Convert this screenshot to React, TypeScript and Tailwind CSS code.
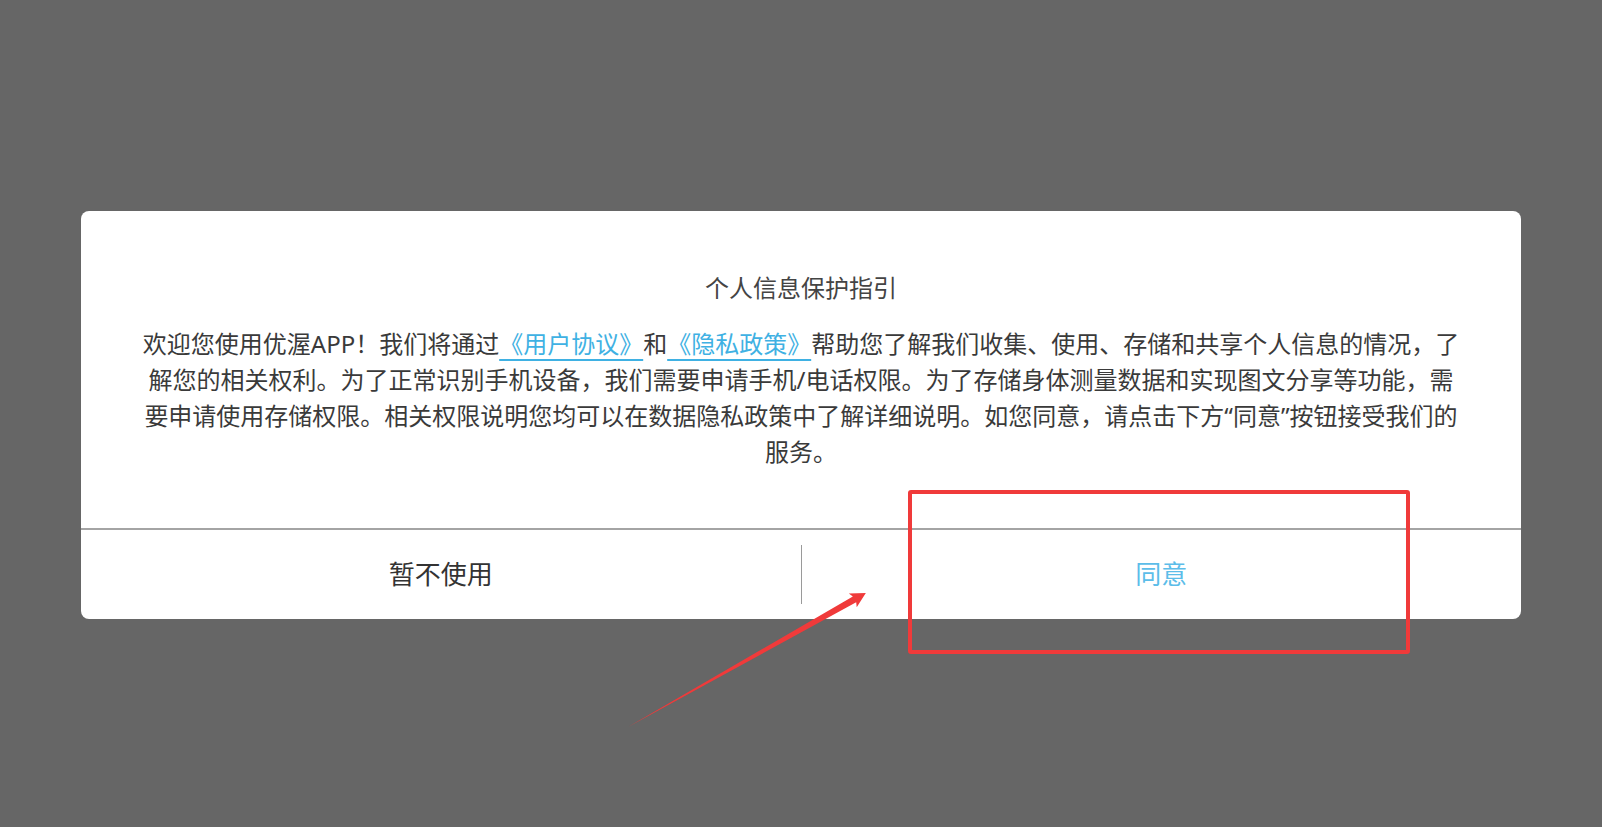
const FONT = "font-['Noto_Sans','Noto_Sans_CJK_SC',sans-serif]";

function Arrow() {
  // tapered red annotation arrow, tail bottom-left -> tip top-right
  const L = 273;
  return (
    <svg
      className="absolute left-0 top-0 pointer-events-none"
      width="1602"
      height="827"
      viewBox="0 0 1602 827"
    >
      <g transform="translate(628 727) rotate(-29.4)">
        <polygon
          points={`0,0 ${L - 13},-3.4 ${L - 15},-8 ${L},0 ${L - 15},8 ${L - 13},3.4`}
          fill="#f03a3a"
        />
      </g>
    </svg>
  );
}

export default function App() {
  return (
    <div className={`relative h-[827px] w-full overflow-hidden bg-[#666666] ${FONT}`}>
      <div className="flex justify-center pt-[211px]">
        <div className="w-[1440px] overflow-hidden rounded-lg bg-white">
          <div className="pt-[59px] text-center text-[24px] leading-[36px] text-[#444444]">
            个人信息保护指引
          </div>

          <p className="mx-auto mt-[20px] w-[1324px] text-center text-[24px] leading-[36px] text-[#3a3a3a] [text-spacing-trim:space-all]">
            欢迎您使用优渥APP！我们将通过
            <span className="text-[#3fb1e3] underline decoration-[1.5px] underline-offset-[6px]">《用户协议》</span>
            和
            <span className="text-[#3fb1e3] underline decoration-[1.5px] underline-offset-[6px]">《隐私政策》</span>
            帮助您了解我们收集、使用、存储和共享个人信息的情况，了解您的相关权利。为了正常识别手机设备，我们需要申请手机/电话权限。为了存储身体测量数据和实现图文分享等功能，需要申请使用存储权限。相关权限说明您均可以在数据隐私政策中了解详细说明。如您同意，请点击下方“同意”按钮接受我们的服务。
          </p>

          <div className="mt-[58px] h-[2px] bg-[#a4a4a4]" />

          <div className="flex h-[89px] items-center">
            <button className="flex h-full flex-1 items-center justify-center text-[26px] text-[#333333]">
              暂不使用
            </button>
            <div className="h-[59px] w-px bg-[#9a9a9a]" />
            <button className="flex h-full flex-1 items-center justify-center text-[26px] text-[#5cbde9]">
              同意
            </button>
          </div>
        </div>
      </div>

      {/* annotation overlay */}
      <div className="absolute left-[908px] top-[490px] h-[164px] w-[502px] rounded-[3px] border-4 border-[#f03a3a]" />
      <Arrow />
    </div>
  );
}
